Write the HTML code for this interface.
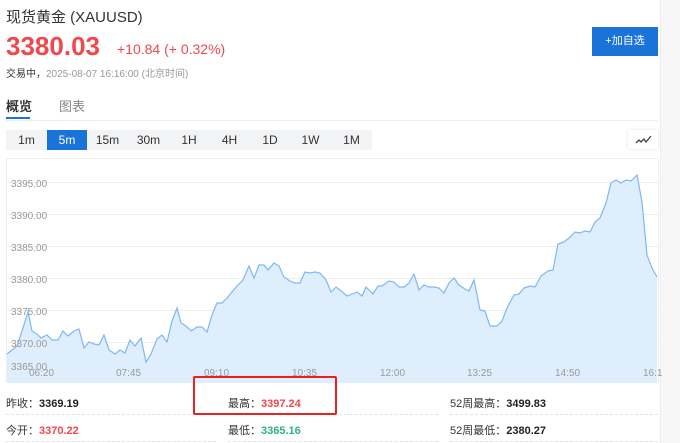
<!DOCTYPE html>
<html><head><meta charset="utf-8"><style>
*{margin:0;padding:0;box-sizing:border-box}
body{width:680px;height:443px;overflow:hidden;background:#fff;font-family:"Liberation Sans","Noto Sans CJK SC",sans-serif;position:relative;color:#333}
.a{position:absolute;white-space:nowrap}
.tb{position:absolute;top:130px;height:20px;line-height:20px;font-size:12px;text-align:center;color:#333}
.lbl{font-size:11px;color:#333}
.v{font-weight:bold;font-size:11px}
.dash{position:absolute;height:0;border-top:1px dashed #e3e3e3}
</style></head><body>
<div class="a" style="left:660px;top:0;width:20px;height:443px;background:#f7f7f7;border-left:1px solid #eee"></div>
<div class="a" style="left:6px;top:6px;font-size:15px;color:#333">现货黄金&nbsp;(XAUUSD)</div>
<div class="a" style="left:6px;top:31px;font-size:26px;font-weight:bold;color:#f0484d">3380.03</div>
<div class="a" style="left:117px;top:41px;font-size:14px;color:#f0484d">+10.84 (+ 0.32%)</div>
<div class="a" style="left:6px;top:65px;font-size:10px;color:#333">交易中，<span style="color:#999">2025-08-07 16:16:00 (北京时间)</span></div>
<div class="a" style="left:592px;top:27px;width:66px;height:29px;background:#1a73d9;color:#fff;font-size:11px;line-height:29px;text-align:center">+加自选</div>
<div class="a" style="left:6px;top:96px;font-size:13px;font-weight:bold;color:#333">概览</div>
<div class="a" style="left:59px;top:96px;font-size:13px;color:#888">图表</div>
<div class="a" style="left:6px;top:117px;width:24px;height:2px;background:#1a73d9"></div>
<div class="a" style="left:6px;top:120px;width:652px;height:1px;background:#eee"></div>
<div class="a" style="left:6px;top:130px;width:366px;height:20px;background:#f2f3f5"></div>
<div class="a" style="left:47px;top:130px;width:40px;height:20px;background:#1a73d9"></div>
<div class="tb" style="left:6px;width:41px">1m</div>
<div class="tb" style="left:47px;width:40px;color:#fff">5m</div>
<div class="tb" style="left:87px;width:41px">15m</div>
<div class="tb" style="left:128px;width:41px">30m</div>
<div class="tb" style="left:169px;width:40px">1H</div>
<div class="tb" style="left:209px;width:41px">4H</div>
<div class="tb" style="left:250px;width:40px">1D</div>
<div class="tb" style="left:290px;width:41px">1W</div>
<div class="tb" style="left:331px;width:41px">1M</div>
<div class="a" style="left:628px;top:130px;width:30px;height:19px;background:#fff;box-shadow:0 0 3px rgba(0,0,0,0.12)"></div>
<svg class="a" style="left:634px;top:133px" width="20" height="14"><path d="M2 10 L5 7 L7 9 L10 6 L12 9 L17 3" fill="none" stroke="#444" stroke-width="1.3"/></svg>
<div class="a" style="left:6px;top:158px;width:652px;height:1px;background:#f0f0f0"></div>
<svg class="a" style="left:0;top:0" width="680" height="443">
<g stroke="#eee" stroke-width="1">
<line x1="7" y1="182.5" x2="658" y2="182.5"/><line x1="7" y1="214.5" x2="658" y2="214.5"/><line x1="7" y1="246.5" x2="658" y2="246.5"/><line x1="7" y1="278.5" x2="658" y2="278.5"/><line x1="7" y1="310.5" x2="658" y2="310.5"/><line x1="7" y1="342.5" x2="658" y2="342.5"/>
<line x1="6.5" y1="159" x2="6.5" y2="383"/><line x1="658.5" y1="159" x2="658.5" y2="383"/>
</g>
<path fill="#dfeefd" d="M7 383 L7 354 L12 350 L17 346 L22 331 L28 312 L32 331 L37 334 L41 338 L47 335 L52 340 L58 340 L63 331 L68 336 L74 331 L79 329 L84 348 L89 342 L94 344 L99 345 L104 335 L109 350 L115 354 L120 350 L125 353 L130 340 L135 346 L141 338 L146 362 L151 354 L157 339 L162 335 L167 342 L172 321 L177 308 L181 323 L186 326 L191 331 L197 327 L202 327 L207 332 L212 315 L217 303 L222 303 L227 298 L232 292 L237 286 L243 280 L249 266 L254 278 L259 265 L264 265 L268 270 L274 263 L279 266 L284 277 L290 281 L295 283 L300 283 L305 272 L310 273 L315 272 L320 273 L326 280 L331 292 L336 287 L340 290 L347 296 L352 294 L357 292 L362 296 L366 287 L373 294 L378 286 L382 286 L389 281 L394 282 L399 287 L404 287 L409 283 L414 274 L419 290 L424 285 L429 287 L434 287 L439 288 L444 293 L449 283 L454 278 L459 285 L465 289 L469 291 L474 280 L480 310 L485 311 L490 326 L497 326 L502 321 L507 308 L514 295 L519 294 L524 288 L530 286 L535 287 L541 276 L548 271 L553 270 L558 244 L564 242 L569 238 L575 232 L580 233 L585 231 L590 232 L595 222 L600 218 L606 203 L611 183 L616 180 L621 183 L626 180 L631 181 L637 175 L642 202 L647 255 L652 268 L657 277 L657 383 Z"/>
<path fill="none" stroke="#7db8f5" stroke-width="1.2" d="M7 354 L12 350 L17 346 L22 331 L28 312 L32 331 L37 334 L41 338 L47 335 L52 340 L58 340 L63 331 L68 336 L74 331 L79 329 L84 348 L89 342 L94 344 L99 345 L104 335 L109 350 L115 354 L120 350 L125 353 L130 340 L135 346 L141 338 L146 362 L151 354 L157 339 L162 335 L167 342 L172 321 L177 308 L181 323 L186 326 L191 331 L197 327 L202 327 L207 332 L212 315 L217 303 L222 303 L227 298 L232 292 L237 286 L243 280 L249 266 L254 278 L259 265 L264 265 L268 270 L274 263 L279 266 L284 277 L290 281 L295 283 L300 283 L305 272 L310 273 L315 272 L320 273 L326 280 L331 292 L336 287 L340 290 L347 296 L352 294 L357 292 L362 296 L366 287 L373 294 L378 286 L382 286 L389 281 L394 282 L399 287 L404 287 L409 283 L414 274 L419 290 L424 285 L429 287 L434 287 L439 288 L444 293 L449 283 L454 278 L459 285 L465 289 L469 291 L474 280 L480 310 L485 311 L490 326 L497 326 L502 321 L507 308 L514 295 L519 294 L524 288 L530 286 L535 287 L541 276 L548 271 L553 270 L558 244 L564 242 L569 238 L575 232 L580 233 L585 231 L590 232 L595 222 L600 218 L606 203 L611 183 L616 180 L621 183 L626 180 L631 181 L637 175 L642 202 L647 255 L652 268 L657 277"/>
<g font-family="Liberation Sans,sans-serif" font-size="10" fill="#999">
<text x="11" y="187">3395.00</text><text x="11" y="219">3390.00</text><text x="11" y="251">3385.00</text><text x="11" y="283">3380.00</text><text x="11" y="315">3375.00</text><text x="11" y="347">3370.00</text><text x="11" y="370">3365.00</text>
<text x="29" y="376">06:20</text><text x="116" y="376">07:45</text><text x="204" y="376">09:10</text><text x="292" y="376">10:35</text><text x="380" y="376">12:00</text><text x="467" y="376">13:25</text><text x="555" y="376">14:50</text><text x="643" y="376">16:1</text>
</g>
</svg>
<div class="a lbl" style="left:6px;top:395px">昨收：<span class="v" style="color:#222">3369.19</span></div>
<div class="a lbl" style="left:228px;top:395px">最高：<span class="v" style="color:#f0484d">3397.24</span></div>
<div class="a lbl" style="left:450px;top:395px">52周最高：<span class="v" style="color:#222">3499.83</span></div>
<div class="a lbl" style="left:6px;top:422px">今开：<span class="v" style="color:#f0484d">3370.22</span></div>
<div class="a lbl" style="left:228px;top:422px">最低：<span class="v" style="color:#2bb37b">3365.16</span></div>
<div class="a lbl" style="left:450px;top:422px">52周最低：<span class="v" style="color:#222">2380.27</span></div>
<div class="dash" style="left:6px;top:414px;width:210px"></div>
<div class="dash" style="left:228px;top:414px;width:210px"></div>
<div class="dash" style="left:450px;top:414px;width:208px"></div>
<div class="dash" style="left:6px;top:441px;width:210px"></div>
<div class="dash" style="left:228px;top:441px;width:210px"></div>
<div class="dash" style="left:450px;top:441px;width:208px"></div>
<div class="a" style="left:193px;top:376px;width:144px;height:39px;border:2px solid #e82222;border-radius:2px"></div>
</body></html>
